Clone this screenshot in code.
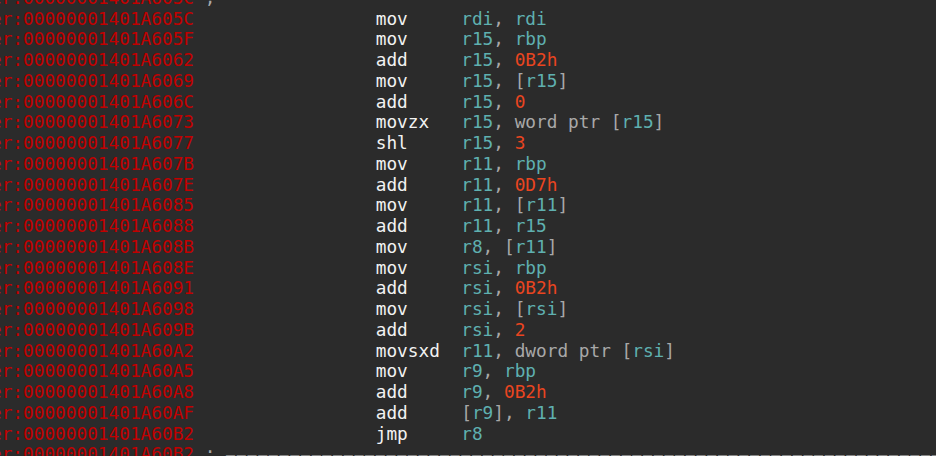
import React from "react";

const rows: [string, string, string][] = [
  ["00000001401A605C", "mov", "rdi, rdi"],
  ["00000001401A605F", "mov", "r15, rbp"],
  ["00000001401A6062", "add", "r15, 0B2h"],
  ["00000001401A6069", "mov", "r15, [r15]"],
  ["00000001401A606C", "add", "r15, 0"],
  ["00000001401A6073", "movzx", "r15, word ptr [r15]"],
  ["00000001401A6077", "shl", "r15, 3"],
  ["00000001401A607B", "mov", "r11, rbp"],
  ["00000001401A607E", "add", "r11, 0D7h"],
  ["00000001401A6085", "mov", "r11, [r11]"],
  ["00000001401A6088", "add", "r11, r15"],
  ["00000001401A608B", "mov", "r8, [r11]"],
  ["00000001401A608E", "mov", "rsi, rbp"],
  ["00000001401A6091", "add", "rsi, 0B2h"],
  ["00000001401A6098", "mov", "rsi, [rsi]"],
  ["00000001401A609B", "add", "rsi, 2"],
  ["00000001401A60A2", "movsxd", "r11, dword ptr [rsi]"],
  ["00000001401A60A5", "mov", "r9, rbp"],
  ["00000001401A60A8", "add", "r9, 0B2h"],
  ["00000001401A60AF", "add", "[r9], r11"],
  ["00000001401A60B2", "jmp", "r8"],
];

function Operand({ text }: { text: string }) {
  const parts = text.split(/(\br\w+\b|\b[0-9][0-9A-F]*h?\b)/);
  return (
    <>
      {parts.map((p, i) => {
        if (!p) return null;
        if (/^r\w+$/.test(p))
          return (
            <span key={i} className="text-[#5fb0b0]">
              {p}
            </span>
          );
        if (/^[0-9]/.test(p))
          return (
            <span key={i} className="text-[#ea4520]">
              {p}
            </span>
          );
        return (
          <span key={i} className="text-[#a8a8a8]">
            {p}
          </span>
        );
      })}
    </>
  );
}

function Line({ children }: { children: React.ReactNode }) {
  return <div className="h-[20.75px] whitespace-pre">{children}</div>;
}

export default function App() {
  return (
    <div className="w-[936px] h-[456px] overflow-hidden bg-[#2b2b2b]">
      <div
        className="-mt-[12.25px] -ml-[9px] text-[17.75px] leading-[20.75px]"
        style={{ fontFamily: '"DejaVu Sans Mono", monospace' }}
      >
        <Line>
          <span className="text-[#c20000]">er:00000001401A605C</span>
          <span className="text-[#a8a8a8]"> ;</span>
        </Line>
        {rows.map(([addr, mn, op]) => (
          <Line key={addr}>
            <span className="text-[#c20000]">er:{addr}</span>
            {" ".repeat(17)}
            <span className="text-[#f2f2f2]">{mn.padEnd(8, " ")}</span>
            <Operand text={op} />
          </Line>
        ))}
        <Line>
          <span className="text-[#c20000]">er:00000001401A60B2</span>
          <span className="text-[#a8a8a8]"> ; </span>
          <span className="text-[15px] tracking-[1.66px] text-[#8a8a8a]">
            {"–".repeat(70)}
          </span>
        </Line>
      </div>
    </div>
  );
}
